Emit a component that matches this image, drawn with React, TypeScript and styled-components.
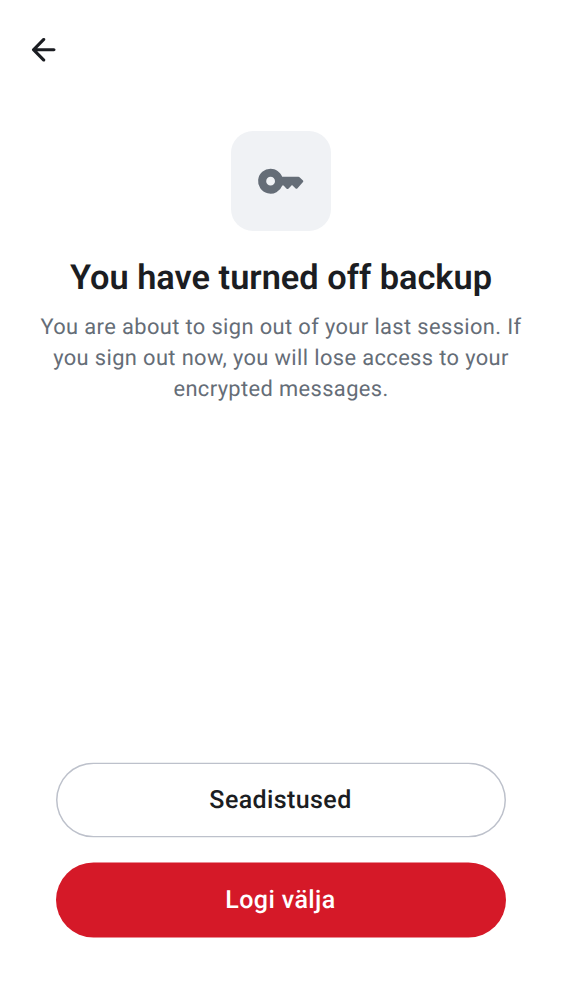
import React from "react";
import styled, { createGlobalStyle } from "styled-components";

const GlobalStyle = createGlobalStyle`
  *, *::before, *::after { box-sizing: border-box; }
  body { margin: 0; background: #fff; text-rendering: geometricPrecision; }
`;

const Screen = styled.main`
  display: flex;
  flex-direction: column;
  height: 1000px;
  padding: 25px 0 63px;
  background: #ffffff;
  font-family: Roboto, sans-serif;
`;

const TopBar = styled.header`
  display: flex;
  height: 50px;
  padding-left: 19px;
`;

const BackButton = styled.button`
  display: grid;
  place-items: center;
  width: 50px;
  height: 50px;
  padding: 0;
  border: 0;
  background: none;
  color: #1b1d22;
`;

const Hero = styled.section`
  display: flex;
  flex: 1;
  flex-direction: column;
  align-items: center;
  padding: 56px 25px 0;
  text-align: center;
`;

const IconTile = styled.div`
  display: grid;
  place-items: center;
  width: 100px;
  height: 100px;
  border-radius: 22px;
  background: #f0f2f5;
  color: #656d77;
`;

const Title = styled.h1`
  margin: 25px 0 0;
  color: #1b1d22;
  font-size: 34.375px;
  font-weight: 600;
  line-height: 44px;
  white-space: nowrap;
`;

const Message = styled.p`
  margin: 12px 0 0;
  color: #656d77;
  font-size: 21.875px;
  letter-spacing: 0.38px;
  line-height: 31px;
`;

const Actions = styled.footer`
  display: flex;
  flex-direction: column;
  gap: 25px;
  padding: 0 56px;
  transform: translateY(0.5px);
`;

const ActionButton = styled.button<{ $destructive?: boolean }>`
  height: 75px;
  padding: 0 1px 0 0;
  border: 0;
  border-radius: 38px;
  box-shadow: ${({ $destructive }) => ($destructive ? "none" : "inset 0 0 0 1.5px #bdc1cb")};
  background: ${({ $destructive }) => ($destructive ? "#d51928" : "#ffffff")};
  color: ${({ $destructive }) => ($destructive ? "#ffffff" : "#1b1d22")};
  font: 500 25px/37px Roboto, sans-serif;
  letter-spacing: 0.4px;
  text-rendering: inherit;
`;

const BackIcon = () => (
  <svg width="37.5" height="37.5" viewBox="0 0 24 24" fill="currentColor" aria-hidden="true">
    <path d="m7.83 13 4.9 4.9q.3.3.287.7a1.05 1.05 0 0 1-.312.7q-.3.275-.7.287a.93.93 0 0 1-.7-.287l-6.6-6.6a.9.9 0 0 1-.213-.325A1.1 1.1 0 0 1 4.426 12q0-.2.062-.375a.9.9 0 0 1 .213-.325l6.6-6.6a.95.95 0 0 1 .687-.275q.413 0 .713.275.3.3.3.713 0 .412-.3.712L7.825 11h10.7q.425 0 .713.287.287.288.287.713 0 .424-.287.713a.97.97 0 0 1-.713.287z" />
  </svg>
);

const KeyIcon = () => (
  <svg width="50" height="50" viewBox="0 0 50 50" fill="currentColor" aria-hidden="true">
    <path
      fillRule="evenodd"
      d="M14.6 12.7c5.1 0 9.7 3.2 11.6 8.1h16.2q.8 0 1.4.6l3.2 3.1q.7.7 0 1.5L41.5 32.2q-1.1 1-2.1 0L36 29l-3.4 3.4q-1.1 1-2.2 0L27.6 29.5h-1.3A12.5 12.5 0 1 1 14.6 12.7ZM14.6 20.8a4.4 4.4 0 1 0 0 8.8a4.4 4.4 0 0 0 0-8.8Z"
    />
  </svg>
);

export default function App() {
  return (
    <>
      <GlobalStyle />
      <Screen>
        <TopBar>
          <BackButton aria-label="Back"><BackIcon /></BackButton>
        </TopBar>
        <Hero>
          <IconTile><KeyIcon /></IconTile>
          <Title>You have turned off backup</Title>
          <Message>
            You are about to sign out of your last session. If<br />
            you sign out now, you will lose access to your<br />
            encrypted messages.
          </Message>
        </Hero>
        <Actions>
          <ActionButton>Seadistused</ActionButton>
          <ActionButton $destructive>Logi välja</ActionButton>
        </Actions>
      </Screen>
    </>
  );
}
